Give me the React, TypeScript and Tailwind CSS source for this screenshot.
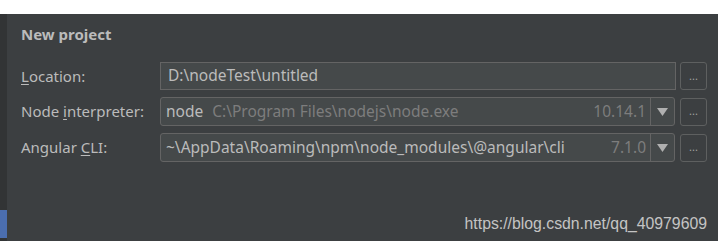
import { Fragment } from "react";

const font = { fontFamily: '"Noto Sans", "Open Sans", sans-serif' };

function BrowseButton() {
  return (
    <button className="flex h-[28px] w-[27px] items-center justify-center rounded-[3px] border border-[#5e6060] bg-[#3c3f41] pb-[2px] text-[11px] leading-none text-[#a0a0a0]">
      ...
    </button>
  );
}

function Arrow() {
  return (
    <div className="flex w-[24px] items-center justify-center border-l border-[#646464]">
      <svg width="11" height="8" viewBox="0 0 11 8">
        <path d="M0 0 H11 L5.5 8 Z" fill="#b0b0b0" />
      </svg>
    </div>
  );
}

export default function App() {
  return (
    <div className="flex h-[241px] w-[718px] flex-col overflow-hidden bg-white" style={font}>
      <div className="h-[14px] shrink-0 bg-white" />
      <div className="flex flex-1 bg-[#3c3f41]">
        <div className="flex w-[7px] flex-col bg-[#323435]">
          <div className="flex-1" />
          <div className="h-[28px] bg-[#4b6eaf]" />
          <div className="h-[3px]" />
        </div>
        <div className="flex flex-1 flex-col pl-[14px] pr-[11px]">
          <div className="pt-[9px] text-[15px] font-bold leading-[22px] text-[#bbbbbb]">New project</div>
          <div className="mt-[17px] grid grid-cols-[139px_1fr] items-center gap-y-[7px] text-[15px] text-[#bbbbbb]">
            <Fragment>
              <div>
                <span className="underline underline-offset-2">L</span>ocation:
              </div>
              <div className="flex items-center gap-[4px]">
                <div className="flex h-[28px] flex-1 items-center border border-[#646464] bg-[#45494a] pl-[7px] text-[15.5px]">
                  D:\nodeTest\untitled
                </div>
                <BrowseButton />
              </div>
            </Fragment>
            <Fragment>
              <div>
                Node <span className="underline underline-offset-2">i</span>nterpreter:
              </div>
              <div className="flex items-center gap-[5px]">
                <div className="flex h-[29px] flex-1 rounded-[3px] border border-[#646464] bg-[#45494a]">
                  <div className="flex flex-1 items-center pl-[5px] text-[15.5px] whitespace-nowrap">
                    <span>node</span>
                    <span className="ml-[9px] text-[#7d7d7d]">C:\Program Files\nodejs\node.exe</span>
                    <span className="ml-auto pr-[4px] text-[#7d7d7d]">10.14.1</span>
                  </div>
                  <Arrow />
                </div>
                <BrowseButton />
              </div>
            </Fragment>
            <Fragment>
              <div>
                Angular <span className="underline underline-offset-2">C</span>LI:
              </div>
              <div className="flex items-center gap-[5px]">
                <div className="flex h-[29px] flex-1 rounded-[3px] border border-[#646464] bg-[#45494a]">
                  <div className="flex flex-1 items-center pl-[5px] text-[15.5px] whitespace-nowrap">
                    <span>~\AppData\Roaming\npm\node_modules\@angular\cli</span>
                    <span className="ml-auto pr-[4px] text-[#7d7d7d]">7.1.0</span>
                  </div>
                  <Arrow />
                </div>
                <BrowseButton />
              </div>
            </Fragment>
          </div>
          <div className="flex-1" />
          <div
            className="pb-[7px] text-right text-[15.8px] leading-[20px] text-[#c4c4c4]"
            style={{ fontFamily: '"Liberation Sans", Arial, sans-serif' }}
          >
            https://blog.csdn.net/qq_40979609
          </div>
        </div>
      </div>
    </div>
  );
}
